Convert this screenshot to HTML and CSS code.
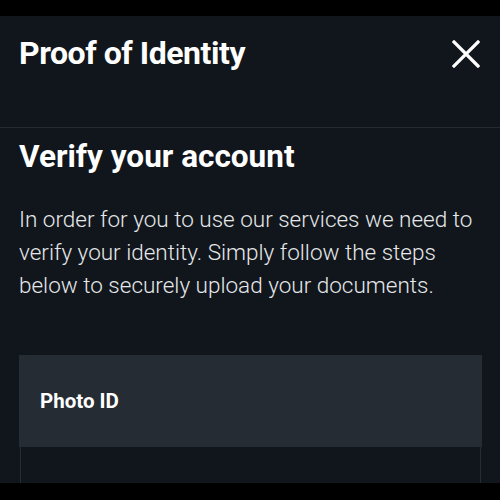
FILE: index.html
```html
<!DOCTYPE html>
<html>
<head>
<meta charset="utf-8">
<link rel="stylesheet" href="styles.css">
</head>
<body>
<div class="panel">
  <header class="header">
    <h1 class="title">Proof of Identity</h1>
    <button class="close" aria-label="Close">
      <svg width="28" height="28" viewBox="0 0 28 28"><path d="M2 2L26 26M26 2L2 26" stroke="#fff" stroke-width="3.2" stroke-linecap="square"/></svg>
    </button>
  </header>
  <main class="content">
    <h2 class="subtitle">Verify your account</h2>
    <p class="intro">In order for you to use our services we need to verify your identity. Simply follow the steps below to securely upload your documents.</p>
    <section class="card">
      <div class="card-head">Photo ID</div>
      <div class="card-body"></div>
    </section>
  </main>
</div>
</body>
</html>
```
FILE: styles.css
```css
html, body { margin: 0; padding: 0; background: #000; }
body { font-family: Roboto, "Noto Sans", sans-serif; color: #fff; }
.panel { margin-top: 16px; height: 467px; background: #11161c; overflow: hidden; }
.header { height: 112px; border-bottom: 1px solid #262b31; display: flex; justify-content: space-between; align-items: flex-start; padding: 0 20px 0 19px; box-sizing: border-box; }
.title { margin: 19px 0 0; font-size: 32px; font-weight: 700; line-height: 36px; letter-spacing: -0.45px; }
.close { margin-top: 24px; background: none; border: 0; padding: 0; width: 28px; height: 28px; }
.close svg { display: block; }
.content { padding: 11px 18px 0 19px; }
.subtitle { margin: 0; font-size: 31.5px; font-weight: 700; line-height: 36px; letter-spacing: 0; }
.intro { margin: 28px 0 0; font-size: 22.5px; font-weight: 300; line-height: 33px; color: #e6e8ea; }
.card { margin-top: 53px; }
.card-head { height: 92px; background: #262c33; display: flex; align-items: center; padding-left: 21px; font-size: 20.5px; font-weight: 700; }
.card-body { height: 60px; margin: 0 1px; border: 1px solid #262c33; border-top: 0; background: #11161c; }
```
